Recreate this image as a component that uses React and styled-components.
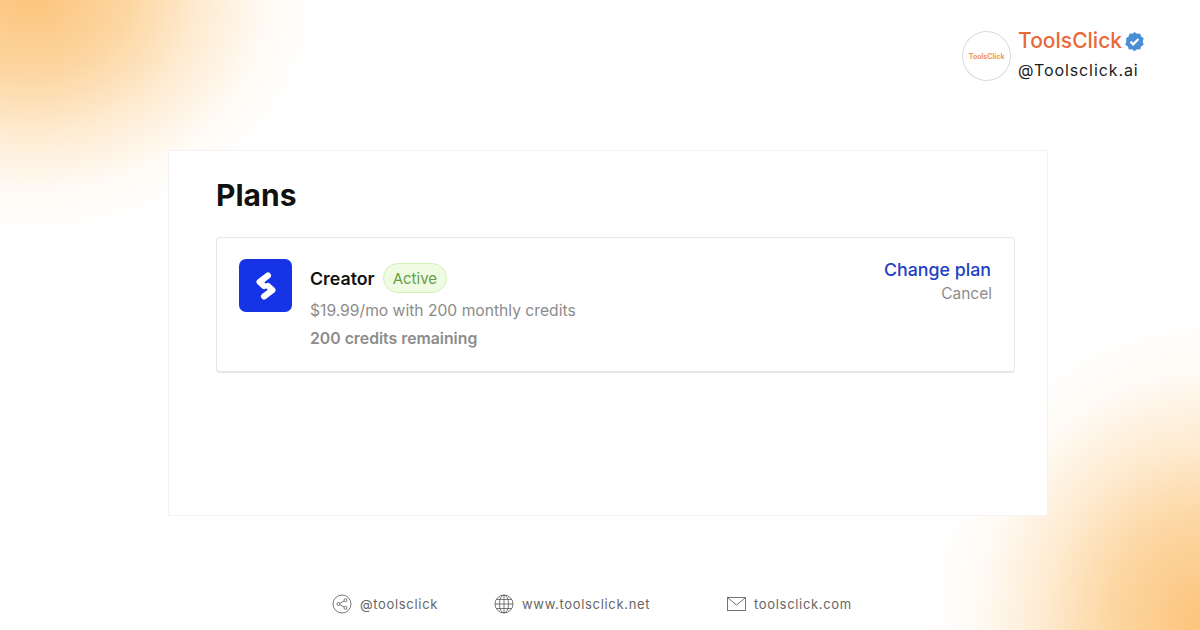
import React from "react";
import styled, { createGlobalStyle } from "styled-components";

const GlobalStyle = createGlobalStyle`
  html, body {
    margin: 0;
    padding: 0;
    background: #fff;
  }
`;

const Page = styled.div`
  width: 1200px;
  height: 630px;
  overflow: hidden;
  display: flex;
  flex-direction: column;
  font-family: Inter, "Liberation Sans", sans-serif;
  background:
    radial-gradient(ellipse 288px 240px at 30px -8px, #fcc680 0%, #fcc680 6%, rgba(252, 205, 140, 0.8) 35%, rgba(253, 222, 178, 0.58) 60%, rgba(254, 238, 216, 0.3) 82%, rgba(255, 255, 255, 0) 100%),
    radial-gradient(ellipse 275px 305px at 1205px 625px, #fcc680 0%, #fcc680 6%, rgba(252, 205, 140, 0.8) 35%, rgba(253, 222, 178, 0.58) 60%, rgba(254, 238, 216, 0.3) 82%, rgba(255, 255, 255, 0) 100%),
    #fff;
`;

const TopBar = styled.header`
  height: 150px;
  display: flex;
  justify-content: flex-end;
  align-items: flex-start;
  padding: 29px 55px 0 0;
  box-sizing: border-box;
  flex: none;
`;

const Brand = styled.div`
  display: flex;
  align-items: flex-start;
  gap: 7px;
`;

const Avatar = styled.div`
  width: 49px;
  height: 50px;
  margin-top: 2px;
  border-radius: 50%;
  border: 1px solid #d9d9d9;
  background: #fff;
  box-sizing: border-box;
  display: flex;
  align-items: center;
  justify-content: center;
  font-size: 7px;
  font-weight: 700;
  color: #f0955a;
`;

const BrandText = styled.div`
  display: flex;
  flex-direction: column;
  gap: 7px;
`;

const BrandName = styled.div`
  display: flex;
  align-items: center;
  gap: 2px;
  font-size: 21px;
  line-height: 24px;
  font-weight: 500;
  color: #e8693a;
`;

const Handle = styled.div`
  font-size: 16px;
  line-height: 20px;
  letter-spacing: 0.9px;
  color: #1c1c1c;
`;

const Card = styled.main`
  width: 880px;
  height: 366px;
  margin-left: 168px;
  box-sizing: border-box;
  border: 1px solid #f3f3f3;
  background: #fff;
  padding: 26px 32px 0 47px;
  flex: none;
`;

const Title = styled.h1`
  margin: 0 0 24px;
  font-size: 30px;
  line-height: 36px;
  font-weight: 700;
  color: #111;
`;

const PlanRow = styled.section`
  height: 136px;
  box-sizing: border-box;
  border: 1px solid #e6e6e6;
  border-bottom-width: 2px;
  border-radius: 4px;
  padding: 21px 22px 0 22px;
  display: flex;
  justify-content: space-between;
`;

const PlanLeft = styled.div`
  display: flex;
  gap: 18px;
`;

const Logo = styled.div`
  width: 53px;
  height: 53px;
  border-radius: 7px;
  background: #1733e6;
  display: flex;
  align-items: center;
  justify-content: center;
`;

const PlanInfo = styled.div`
  display: flex;
  flex-direction: column;
  padding-top: 4px;
`;

const NameRow = styled.div`
  display: flex;
  align-items: center;
  gap: 8px;
  height: 30px;
  margin-bottom: 8px;
`;

const PlanName = styled.span`
  font-size: 17.8px;
  font-weight: 600;
  color: #111;
`;

const Badge = styled.span`
  height: 30px;
  box-sizing: border-box;
  padding: 0 9px;
  display: flex;
  align-items: center;
  border: 1px solid #d3f0b8;
  border-radius: 15px;
  background: #f0fbe4;
  font-size: 15px;
  color: #669f45;
`;

const Detail = styled.div`
  font-size: ${(p) => (p.$strong ? 15.8 : 15.65)}px;
  line-height: 20px;
  color: #8c8c8c;
  margin-bottom: 8px;
  font-weight: ${(p) => (p.$strong ? 600 : 400)};
`;

const Actions = styled.div`
  display: flex;
  flex-direction: column;
  align-items: flex-end;
  gap: 3px;
`;

const ChangeLink = styled.a`
  font-size: 17.8px;
  line-height: 22px;
  font-weight: 500;
  color: #2340c4;
  margin-right: 1px;
`;

const CancelLink = styled.a`
  font-size: 15.5px;
  line-height: 20px;
  color: #8c8c8c;
`;

const Footer = styled.footer`
  flex: 1;
  display: flex;
  align-items: flex-start;
  padding: 78px 0 0 332px;
`;

const FootItem = styled.div`
  display: flex;
  align-items: center;
  gap: 8px;
  width: ${(p) => p.$w}px;
  font-size: 13px;
  line-height: 20px;
  letter-spacing: 0.68px;
  color: #666;
`;

export default function App() {
  return (
    <Page>
      <GlobalStyle />
      <TopBar>
        <Brand>
          <Avatar>ToolsClick</Avatar>
          <BrandText>
            <BrandName>
              ToolsClick
              <svg width="21" height="21" viewBox="0 0 24 24">
                <path
                  fill="#4a8fd6"
                  d="M12 1l2.9 2.1 3.6-.2 1.1 3.4 2.9 2.1-1.1 3.6 1.1 3.6-2.9 2.1-1.1 3.4-3.6-.2L12 23l-2.9-2.1-3.6.2-1.1-3.4-2.9-2.1 1.1-3.6L2.4 8.4l2.9-2.1 1.1-3.4 3.6.2z"
                />
                <path d="M7.5 12.2l3 3 6-6" fill="none" stroke="#fff" strokeWidth="2.6" />
              </svg>
            </BrandName>
            <Handle>@Toolsclick.ai</Handle>
          </BrandText>
        </Brand>
      </TopBar>
      <Card>
        <Title>Plans</Title>
        <PlanRow>
          <PlanLeft>
            <Logo>
              <svg width="26" height="34" viewBox="0 0 26 34" fill="none" stroke="#fff" strokeWidth="6" strokeLinecap="round" strokeLinejoin="round">
                <path d="M15 6.5 L6.5 13 L11 17" />
                <path d="M11 27.5 L19.5 21 L15 17" />
              </svg>
            </Logo>
            <PlanInfo>
              <NameRow>
                <PlanName>Creator</PlanName>
                <Badge>Active</Badge>
              </NameRow>
              <Detail>$19.99/mo with 200 monthly credits</Detail>
              <Detail $strong>200 credits remaining</Detail>
            </PlanInfo>
          </PlanLeft>
          <Actions>
            <ChangeLink>Change plan</ChangeLink>
            <CancelLink>Cancel</CancelLink>
          </Actions>
        </PlanRow>
      </Card>
      <Footer>
        <FootItem $w={162}>
          <svg width="20" height="20" viewBox="0 0 20 20" fill="none" stroke="#666" strokeWidth="0.9">
            <circle cx="10" cy="10" r="9" />
            <circle cx="13.5" cy="6.2" r="1.5" />
            <circle cx="6.5" cy="10" r="1.5" />
            <circle cx="13.5" cy="13.8" r="1.5" />
            <path d="M8 9.2l4.2-2.2M8 10.8l4.2 2.2" />
          </svg>
          @toolsclick
        </FootItem>
        <FootItem $w={233}>
          <svg width="20" height="20" viewBox="0 0 20 20" fill="none" stroke="#666" strokeWidth="0.9">
            <circle cx="10" cy="10" r="9" />
            <ellipse cx="10" cy="10" rx="4.5" ry="9" />
            <path d="M10 1v18M1 10h18M2.2 5.5h15.6M2.2 14.5h15.6" />
          </svg>
          www.toolsclick.net
        </FootItem>
        <FootItem>
          <svg width="19" height="14" viewBox="0 0 19 14" fill="none" stroke="#666" strokeWidth="0.9">
            <rect x="0.5" y="0.5" width="18" height="13" />
            <path d="M1 1l8.5 7 8.5-7" />
          </svg>
          toolsclick.com
        </FootItem>
      </Footer>
    </Page>
  );
}
